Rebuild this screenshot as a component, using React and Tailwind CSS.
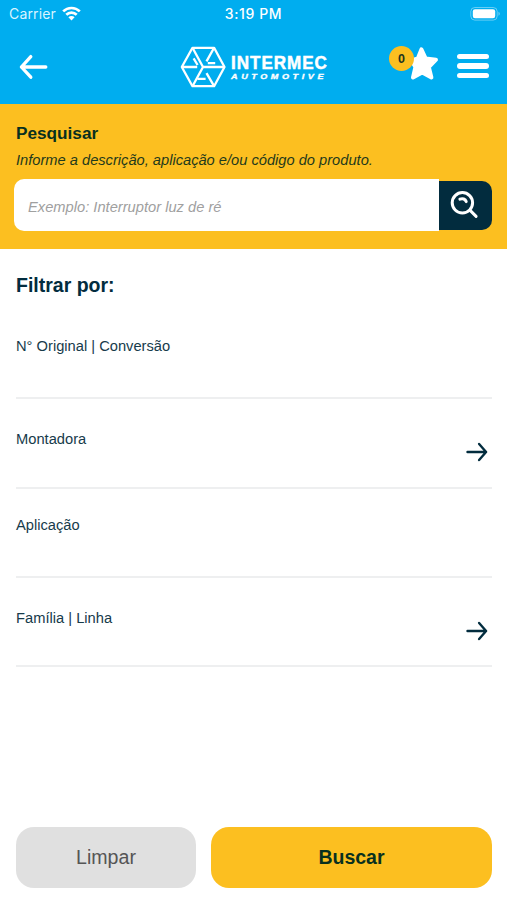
const SANS = "font-['Liberation_Sans',Arial,sans-serif]";

function StatusBar() {
  return (
    <div className="grid h-7 grid-cols-3 items-center font-['Inter',sans-serif] text-[14px] leading-7 text-white">
      <div className="flex items-center gap-[6px] pl-[9px] text-[#d9f4ff]">
        <span className="tracking-[0.15px]">Carrier</span>
        <svg className="-mt-[2px]" width="19" height="15" viewBox="0 0 19 15" fill="none" stroke="white" strokeWidth="2.7">
          <path d="M1.2 5.4a11.8 11.8 0 0 1 16.6 0" />
          <path d="M4.3 8.8a7.4 7.4 0 0 1 10.4 0" />
          <path d="M9.5 14.4 6.4 11.3a4.4 4.4 0 0 1 6.2 0Z" fill="white" stroke="none" />
        </svg>
      </div>
      <div className="text-center font-medium tracking-[0.6px]">3:19 PM</div>
      <div className="flex justify-end pr-[6px]">
        <svg className="-mt-[1px]" width="31" height="14" viewBox="0 0 31 14">
          <rect x="0.8" y="0.5" width="26.4" height="12.6" rx="4" fill="none" stroke="white" strokeOpacity="0.4" />
          <rect x="2.8" y="2.3" width="22.4" height="9" rx="2.2" fill="white" />
          <path d="M28.5 4.8v4a2.2 2.2 0 0 0 0-4Z" fill="white" fillOpacity="0.45" />
        </svg>
      </div>
    </div>
  );
}

function Logo() {
  return (
    <div className="flex items-center text-white">
      <svg className="shrink-0" width="46" height="42" viewBox="0 0 46 42" fill="none" stroke="white" strokeWidth="2.3" strokeLinejoin="round">
        <path d="M12.5 1.8h21.6L44.5 21 34.1 40.2H12.5L1.8 21Z" />
        <path d="M12.5 1.8 23 21h21.5M23 21 12.5 40.2" />
        <path d="M1.8 21h15.4M17.6 19 13.6 12.4M34.1 1.8l-7.6 13.6M27.8 17.2h7.4M34.1 40.2l-7.6-13M17.4 32.8h8.2" />
      </svg>
      <div className="flex flex-col pt-[2px] pl-[5px]">
        <span className="h-[16px] origin-left scale-x-[0.97] whitespace-nowrap text-[17.6px] leading-[16px] font-bold tracking-[1px] [-webkit-text-stroke:0.5px_white]">
          INTERMEC
        </span>
        <span className="mt-[1px] origin-left scale-x-[1.12] whitespace-nowrap text-[8.1px] leading-[9px] font-bold tracking-[3.2px] italic [-webkit-text-stroke:0.35px_white]">
          AUTOMOTIVE
        </span>
      </div>
    </div>
  );
}

function Header() {
  return (
    <div className="flex h-[76px] items-center pr-[18px] pl-[19px]">
      <svg className="mt-[2px]" width="30" height="28" viewBox="0 0 30 28" fill="none" stroke="white" strokeWidth="3.3" strokeLinecap="round" strokeLinejoin="round">
        <path d="M26.8 14H2.4M11.8 3.6 2.4 14l9.4 10.2" />
      </svg>
      <div className="mt-[2px] ml-[131px] w-[150px]">
        <Logo />
      </div>
      <div className="ml-auto flex items-center gap-[18px]">
        <div className="relative -mt-[5px] h-[36px] w-[50px]">
          <svg className="absolute top-0 left-[19px]" width="32" height="36" viewBox="0 0 32 36" fill="white" stroke="white" strokeWidth="4" strokeLinejoin="round">
            <path d="M13.4 3.4 17.6 12.4l10.4 1.3-7.2 7.4 2.6 10.4-9.2-4.9-9.2 4.9 2.4-10.4L3.4 14.3l6.4-1.9Z" />
          </svg>
          <span className="absolute top-0 left-0 flex h-[25px] w-[25px] items-center justify-center rounded-full bg-[#fcbf20] pt-[2px] text-[12.5px] font-bold text-[#24341f]">
            0
          </span>
        </div>
        <div className="flex w-[32px] flex-col gap-[4px]">
          <i className="h-[5.5px] rounded-full bg-white" />
          <i className="h-[5.5px] rounded-full bg-white" />
          <i className="h-[5.5px] rounded-full bg-white" />
        </div>
      </div>
    </div>
  );
}

function SearchPanel() {
  return (
    <section className="h-[145px] bg-[#fcbf20] pt-[18px] text-[#08301f]">
      <h1 className="pl-4 text-[17.2px] leading-[22px] font-bold">Pesquisar</h1>
      <p className="mt-[6px] pl-4 text-[14.67px] leading-[20px] text-[#1f3a1c] italic">
        Informe a descrição, aplicação e/ou código do produto.
      </p>
      <div className="mt-[9px] flex items-center pr-[15px] pl-[14px]">
        <div className="flex h-[52px] flex-1 items-center rounded-l-[10px] bg-white pt-[5px] pl-[14px] text-[14.7px] text-[#a0a0a0] italic">
          Exemplo: Interruptor luz de ré
        </div>
        <div className="flex h-[49px] w-[53.5px] items-center rounded-r-[10px] bg-[#022c3e] pl-[11px]">
          <svg width="30" height="30" viewBox="0 0 30 30" fill="none" stroke="white" strokeWidth="3" strokeLinecap="round">
            <circle cx="12.4" cy="12.8" r="10.2" />
            <path d="M20.1 20.4l6 6M9.9 9.2c2.8-1.2 5.4-.2 6.3 2.4" />
          </svg>
        </div>
      </div>
    </section>
  );
}

function Arrow() {
  return (
    <svg width="22" height="20" viewBox="0 0 22 20" fill="none" stroke="#022c3e" strokeWidth="2.4" strokeLinecap="round" strokeLinejoin="round">
      <path d="M1.5 10h18.6M13.1 2l7 8-7 8" />
    </svg>
  );
}

const FILTERS = [
  { label: "N° Original | Conversão", arrow: false },
  { label: "Montadora", arrow: true },
  { label: "Aplicação", arrow: false },
  { label: "Família | Linha", arrow: true },
];

function FilterRow({ label, arrow }) {
  return (
    <div className={`flex h-[89.2px] justify-between border-b-2 border-[#eeeff0] ${arrow ? "pt-[30px]" : "pt-[26px]"}`}>
      <span className="text-[14.7px] leading-[20px] text-[#173b4b]">{label}</span>
      {arrow && (
        <span className="mt-[13px] mr-[4px]">
          <Arrow />
        </span>
      )}
    </div>
  );
}

export default function App() {
  return (
    <div className={`flex h-[900px] w-[507px] flex-col bg-white ${SANS}`}>
      <header className="h-[104px] bg-[#00adef]">
        <StatusBar />
        <Header />
      </header>
      <SearchPanel />
      <main className="flex-1 px-4 pt-[23px]">
        <h2 className="text-[19.5px] leading-[26px] font-bold text-[#022c3e]">Filtrar por:</h2>
        <div className="mt-[12.3px] mr-[-1px]">
          {FILTERS.map((f) => (
            <FilterRow key={f.label} {...f} />
          ))}
        </div>
      </main>
      <footer className="flex gap-[15px] pr-[15px] pb-[12px] pl-4">
        <button className="h-[61px] w-[180px] rounded-[18px] bg-[#e0e0e0] text-[19.6px] text-[#555]">Limpar</button>
        <button className="h-[61px] flex-1 rounded-[18px] bg-[#fcbf20] text-[19.5px] font-bold text-[#08301f]">Buscar</button>
      </footer>
    </div>
  );
}
